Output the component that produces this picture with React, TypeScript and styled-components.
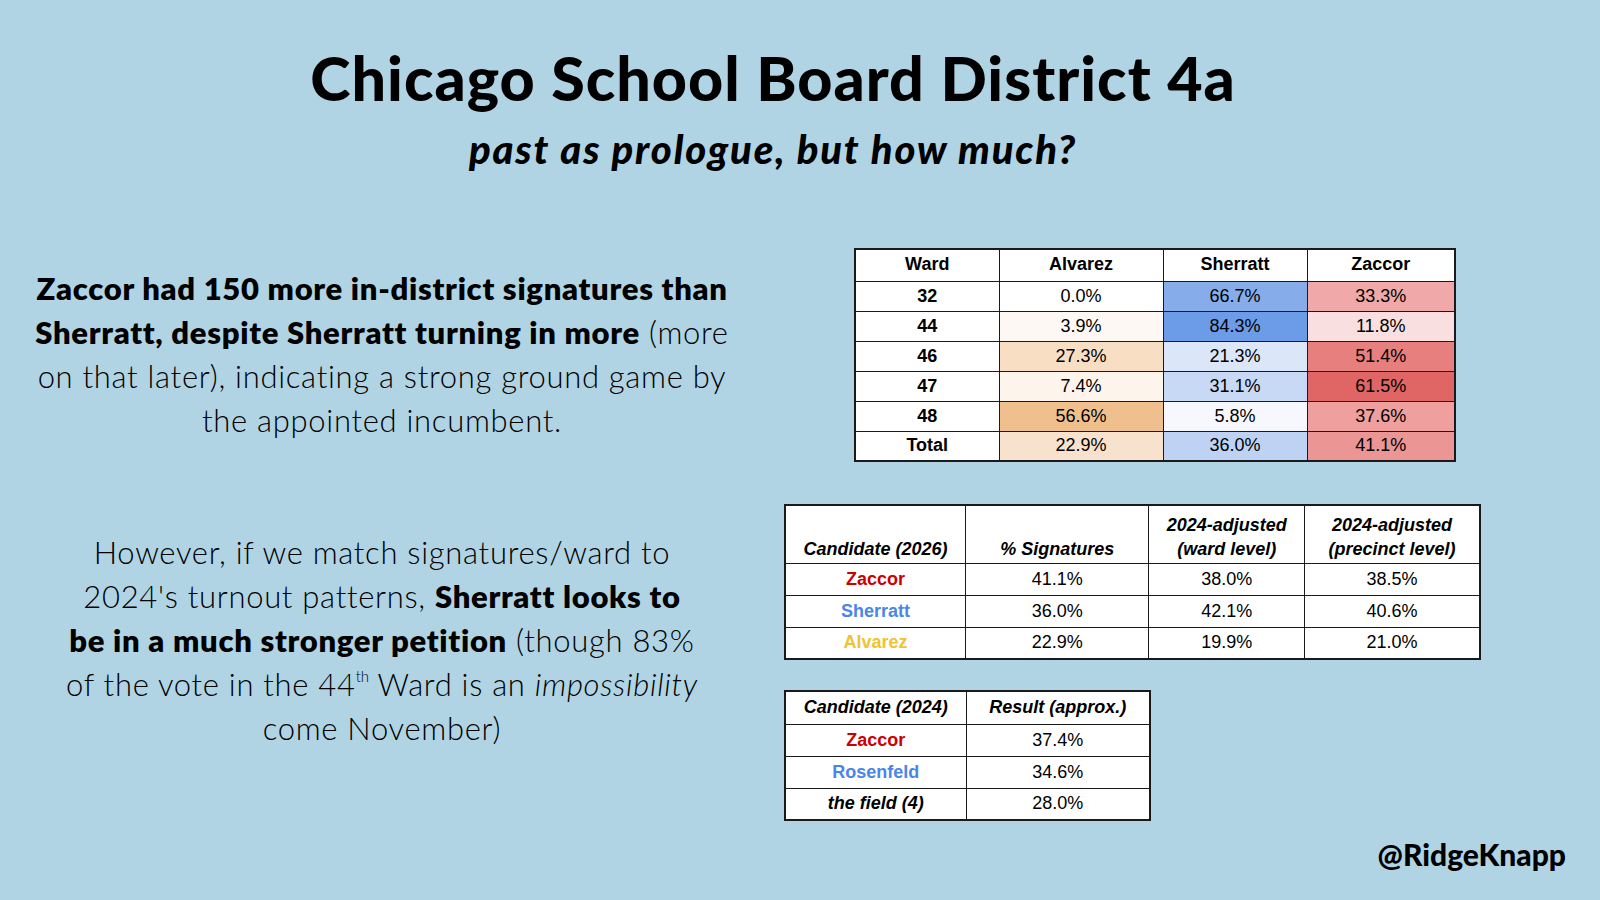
import React from "react";
import styled, { createGlobalStyle } from "styled-components";

const GlobalStyle = createGlobalStyle`
  html, body {
    margin: 0;
    padding: 0;
    background: #b0d4e4;
  }
  body {
    font-family: Lato, "Open Sans", sans-serif;
    color: #000;
  }
`;

type Tone = "plain" | "z" | "s" | "a";

interface WardRow {
  ward: string;
  alvarez: [string, string];
  sherratt: [string, string];
  zaccor: [string, string];
}

const wardRows: WardRow[] = [
  { ward: "32", alvarez: ["0.0%", "#ffffff"], sherratt: ["66.7%", "#86ace9"], zaccor: ["33.3%", "#f0a9a8"] },
  { ward: "44", alvarez: ["3.9%", "#fdf8f4"], sherratt: ["84.3%", "#6c9ce8"], zaccor: ["11.8%", "#f9dfdf"] },
  { ward: "46", alvarez: ["27.3%", "#f8dfc4"], sherratt: ["21.3%", "#dbe6f9"], zaccor: ["51.4%", "#e77f7e"] },
  { ward: "47", alvarez: ["7.4%", "#fdf4ec"], sherratt: ["31.1%", "#c7d9f5"], zaccor: ["61.5%", "#e06565"] },
  { ward: "48", alvarez: ["56.6%", "#efc08d"], sherratt: ["5.8%", "#f6f8fd"], zaccor: ["37.6%", "#ee9f9e"] },
  { ward: "Total", alvarez: ["22.9%", "#f9e2cd"], sherratt: ["36.0%", "#bed3f4"], zaccor: ["41.1%", "#eb9595"] },
];

const adjustedRows: { name: string; tone: Tone; cells: string[] }[] = [
  { name: "Zaccor", tone: "z", cells: ["41.1%", "38.0%", "38.5%"] },
  { name: "Sherratt", tone: "s", cells: ["36.0%", "42.1%", "40.6%"] },
  { name: "Alvarez", tone: "a", cells: ["22.9%", "19.9%", "21.0%"] },
];

const resultRows: { name: string; tone: Tone; italic?: boolean; result: string }[] = [
  { name: "Zaccor", tone: "z", result: "37.4%" },
  { name: "Rosenfeld", tone: "s", result: "34.6%" },
  { name: "the field (4)", tone: "plain", italic: true, result: "28.0%" },
];

const toneColor: Record<Tone, string> = {
  plain: "#000",
  z: "#cc0000",
  s: "#4a86e8",
  a: "#f1c232",
};

const App: React.FC = () => {
  return (
    <Page>
      <GlobalStyle />
      <Header>
        <Title>Chicago School Board District 4a</Title>
        <Subtitle>past as prologue, but how much?</Subtitle>
      </Header>

      <Main>
        <TextColumn>
          <Para>
            <b>Zaccor had 150 more in-district signatures than</b>
            <br />
            <b>Sherratt, despite Sherratt turning in more</b> (more
            <br />
            on that later), indicating a strong ground game by
            <br />
            the appointed incumbent.
          </Para>
          <Para>
            However, if we match signatures/ward to
            <br />
            2024's turnout patterns, <b>Sherratt looks to</b>
            <br />
            <b>be in a much stronger petition</b> (though 83%
            <br />
            of the vote in the 44<sup>th</sup> Ward is an <i>impossibility</i>
            <br />
            come November)
          </Para>
        </TextColumn>

        <TableColumn>
          <Sheet $offset={70}>
            <colgroup>
              <col style={{ width: 144 }} />
              <col style={{ width: 164 }} />
              <col style={{ width: 144 }} />
              <col style={{ width: 148 }} />
            </colgroup>
            <thead>
              <Row $h={32}>
                <HeadCell>Ward</HeadCell>
                <HeadCell>Alvarez</HeadCell>
                <HeadCell>Sherratt</HeadCell>
                <HeadCell>Zaccor</HeadCell>
              </Row>
            </thead>
            <tbody>
              {wardRows.map((r) => (
                <Row key={r.ward} $h={30}>
                  <Cell $bold>{r.ward}</Cell>
                  <Cell $bg={r.alvarez[1]}>{r.alvarez[0]}</Cell>
                  <Cell $bg={r.sherratt[1]}>{r.sherratt[0]}</Cell>
                  <Cell $bg={r.zaccor[1]}>{r.zaccor[0]}</Cell>
                </Row>
              ))}
            </tbody>
          </Sheet>

          <Sheet $top={42}>
            <colgroup>
              <col style={{ width: 181 }} />
              <col style={{ width: 184 }} />
              <col style={{ width: 156 }} />
              <col style={{ width: 176 }} />
            </colgroup>
            <thead>
              <Row $h={58}>
                <HeadCell $italic $bottom>Candidate (2026)</HeadCell>
                <HeadCell $italic $bottom>% Signatures</HeadCell>
                <HeadCell $italic $bottom>
                  2024-adjusted
                  <br />
                  (ward level)
                </HeadCell>
                <HeadCell $italic $bottom>
                  2024-adjusted
                  <br />
                  (precinct level)
                </HeadCell>
              </Row>
            </thead>
            <tbody>
              {adjustedRows.map((r) => (
                <Row key={r.name} $h={32}>
                  <Cell $bold $color={toneColor[r.tone]}>{r.name}</Cell>
                  {r.cells.map((c, i) => (
                    <Cell key={i}>{c}</Cell>
                  ))}
                </Row>
              ))}
            </tbody>
          </Sheet>

          <Sheet $top={30}>
            <colgroup>
              <col style={{ width: 181 }} />
              <col style={{ width: 184 }} />
            </colgroup>
            <thead>
              <Row $h={33}>
                <HeadCell $italic>Candidate (2024)</HeadCell>
                <HeadCell $italic>Result (approx.)</HeadCell>
              </Row>
            </thead>
            <tbody>
              {resultRows.map((r) => (
                <Row key={r.name} $h={32}>
                  <Cell $bold $italic={r.italic} $color={toneColor[r.tone]}>
                    {r.name}
                  </Cell>
                  <Cell>{r.result}</Cell>
                </Row>
              ))}
            </tbody>
          </Sheet>
        </TableColumn>
      </Main>

      <Footer>
        <Handle>@RidgeKnapp</Handle>
      </Footer>
    </Page>
  );
};

const Page = styled.div`
  width: 1600px;
  height: 900px;
  box-sizing: border-box;
  padding-top: 42px;
  display: flex;
  flex-direction: column;
  overflow: hidden;
  background: #b0d4e4;
`;

const Header = styled.header`
  display: flex;
  flex-direction: column;
  align-items: center;
  padding-right: 54px;
`;

const Title = styled.h1`
  margin: 0;
  font-family: Lato, sans-serif;
  font-weight: 900;
  font-size: 61px;
  line-height: 72px;
  letter-spacing: 1px;
`;

const Subtitle = styled.h2`
  margin: 13px 0 0;
  font-family: Lato, sans-serif;
  font-weight: 900;
  font-style: italic;
  font-size: 40px;
  line-height: 44px;
  letter-spacing: 1.8px;
`;

const Main = styled.main`
  display: grid;
  grid-template-columns: 700px 697px;
  column-gap: 52px;
  padding-left: 32px;
  margin-top: 77px;
`;

const TextColumn = styled.div`
  display: flex;
  flex-direction: column;
  gap: 88px;
  padding-top: 18px;
`;

const Para = styled.p`
  margin: 0;
  text-align: center;
  white-space: nowrap;
  font-family: Lato, sans-serif;
  font-weight: 300;
  font-size: 31px;
  line-height: 44px;
  letter-spacing: 0.7px;

  b {
    font-weight: 800;
    letter-spacing: 0.7px;
  }
  sup {
    font-size: 15px;
    line-height: 0;
    vertical-align: 14px;
    letter-spacing: 0;
  }
`;

const TableColumn = styled.div`
  display: flex;
  flex-direction: column;
  align-items: flex-start;
`;

const Sheet = styled.table<{ $offset?: number; $top?: number }>`
  border-collapse: collapse;
  table-layout: fixed;
  background: #fff;
  margin-left: ${(p) => p.$offset ?? 0}px;
  margin-top: ${(p) => p.$top ?? 0}px;
  border: 2px solid #1a1a1a;
  font-family: "Liberation Sans", Arial, sans-serif;
  font-size: 18px;
  color: #000;
`;

const Row = styled.tr<{ $h: number }>`
  height: ${(p) => p.$h}px;
`;

const HeadCell = styled.th<{ $italic?: boolean; $bottom?: boolean }>`
  padding: 0 4px 2px;
  border: 1px solid #1a1a1a;
  font-weight: 700;
  font-style: ${(p) => (p.$italic ? "italic" : "normal")};
  vertical-align: ${(p) => (p.$bottom ? "bottom" : "middle")};
  line-height: 24px;
  text-align: center;
  white-space: nowrap;
`;

const Cell = styled.td<{ $bg?: string; $bold?: boolean; $italic?: boolean; $color?: string }>`
  padding: 0 4px;
  border: 1px solid #1a1a1a;
  text-align: center;
  vertical-align: middle;
  background: ${(p) => p.$bg ?? "#fff"};
  font-weight: ${(p) => (p.$bold ? 700 : 400)};
  font-style: ${(p) => (p.$italic ? "italic" : "normal")};
  color: ${(p) => p.$color ?? "#000"};
`;

const Footer = styled.footer`
  margin-top: auto;
  display: flex;
  justify-content: flex-end;
  padding: 0 34px 28px 0;
`;

const Handle = styled.div`
  font-family: Lato, sans-serif;
  font-weight: 900;
  font-size: 30px;
  line-height: 36px;
`;

export default App;
